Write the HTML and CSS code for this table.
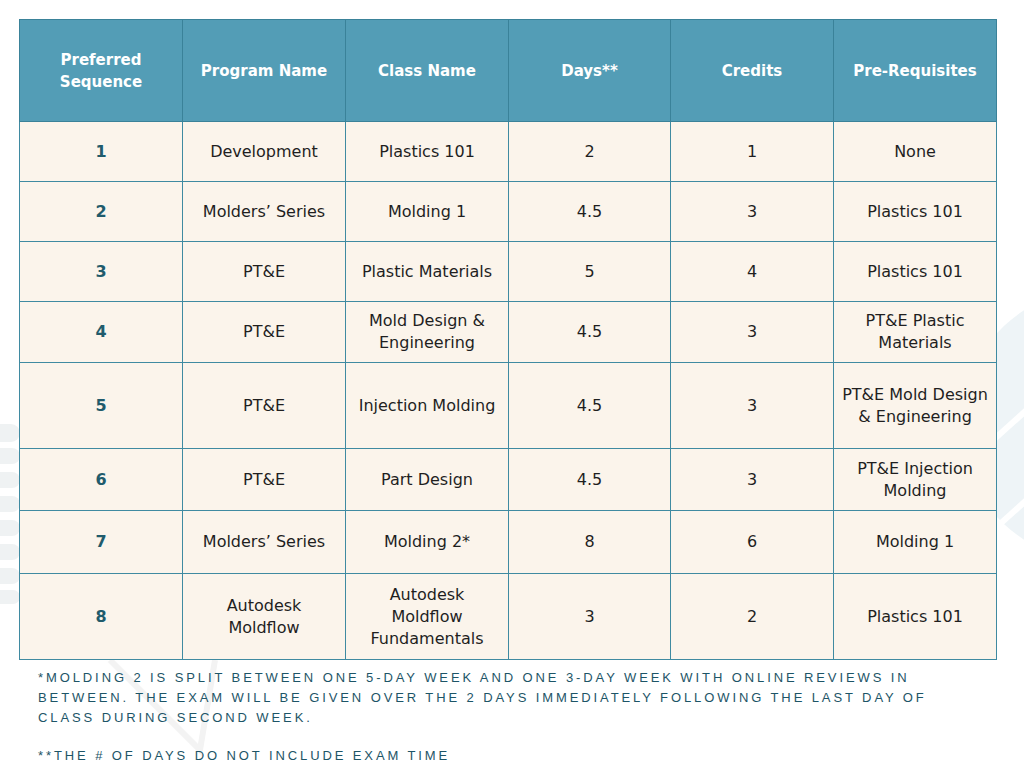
FILE: index.html
```html
<!DOCTYPE html>
<html>
<head>
<meta charset="utf-8">
<link rel="stylesheet" href="styles.css">
</head>
<body>
<svg class="decor" width="1024" height="768" viewBox="0 0 1024 768" aria-hidden="true">
  <ellipse cx="1110" cy="425" rx="150" ry="140" fill="#eef4f7"/>
  <line x1="960" y1="560" x2="1060" y2="470" stroke="#ffffff" stroke-width="6"/>
  <line x1="960" y1="470" x2="1060" y2="380" stroke="#ffffff" stroke-width="6"/>
  <g fill="#eff2f3">
    <rect x="-20" y="424" width="40" height="18" rx="9"/>
    <rect x="-20" y="448" width="40" height="16" rx="8"/>
    <rect x="-20" y="472" width="40" height="16" rx="8"/>
    <rect x="-20" y="496" width="40" height="16" rx="8"/>
    <rect x="-20" y="520" width="40" height="16" rx="8"/>
    <rect x="-20" y="544" width="40" height="16" rx="8"/>
    <rect x="-20" y="568" width="40" height="16" rx="8"/>
    <rect x="-20" y="590" width="40" height="14" rx="7"/>
  </g>
  <polyline points="110,660 200,750 215,660" fill="none" stroke="#f3f3f3" stroke-width="6"/>
</svg>
<main class="page">
  <table class="grid">
    <colgroup>
      <col class="c"><col class="c"><col class="c"><col class="c narrow"><col class="c"><col class="c">
    </colgroup>
    <thead>
      <tr class="head">
        <th>Preferred<br>Sequence</th>
        <th>Program Name</th>
        <th>Class Name</th>
        <th>Days**</th>
        <th>Credits</th>
        <th>Pre-Requisites</th>
      </tr>
    </thead>
    <tbody>
      <tr class="r60"><td class="seq">1</td><td>Development</td><td>Plastics 101</td><td>2</td><td>1</td><td>None</td></tr>
      <tr class="r60"><td class="seq">2</td><td>Molders’ Series</td><td>Molding 1</td><td>4.5</td><td>3</td><td>Plastics 101</td></tr>
      <tr class="r60"><td class="seq">3</td><td>PT&amp;E</td><td>Plastic Materials</td><td>5</td><td>4</td><td>Plastics 101</td></tr>
      <tr class="r61"><td class="seq">4</td><td>PT&amp;E</td><td>Mold Design &amp;<br>Engineering</td><td>4.5</td><td>3</td><td>PT&amp;E Plastic<br>Materials</td></tr>
      <tr class="r86"><td class="seq">5</td><td>PT&amp;E</td><td>Injection Molding</td><td>4.5</td><td>3</td><td>PT&amp;E Mold Design<br>&amp; Engineering</td></tr>
      <tr class="r62"><td class="seq">6</td><td>PT&amp;E</td><td>Part Design</td><td>4.5</td><td>3</td><td>PT&amp;E Injection<br>Molding</td></tr>
      <tr class="r63"><td class="seq">7</td><td>Molders’ Series</td><td>Molding 2*</td><td>8</td><td>6</td><td>Molding 1</td></tr>
      <tr class="r86"><td class="seq">8</td><td>Autodesk<br>Moldflow</td><td>Autodesk<br>Moldflow<br>Fundamentals</td><td>3</td><td>2</td><td>Plastics 101</td></tr>
    </tbody>
  </table>
  <section class="notes">
    <p>*Molding 2 is split between one 5-day week and one 3-day week with online reviews in between. The exam will be given over the 2 days immediately following the last day of class during second week.</p>
    <p>**The # of days do not include exam time</p>
  </section>
</main>
</body>
</html>
```
FILE: styles.css
```css
html, body {
  margin: 0;
  padding: 0;
  background: #ffffff;
}
body {
  width: 1024px;
  height: 768px;
  overflow: hidden;
  position: relative;
  font-family: "DejaVu Sans", "Liberation Sans", sans-serif;
}
.decor {
  position: absolute;
  left: 0;
  top: 0;
  z-index: 0;
}
.page {
  position: relative;
  z-index: 1;
  padding: 19px 0 0 19px;
}
.grid {
  border-collapse: collapse;
  table-layout: fixed;
  width: 977px;
}
.c { width: 163px; }
.c.narrow { width: 162px; }
.grid th, .grid td {
  border: 1px solid #3f8aa1;
  text-align: center;
  vertical-align: middle;
  padding: 0 4px;
  line-height: 22px;
}
.head { height: 102px; }
.grid th {
  background: #539db6;
  color: #ffffff;
  font-weight: 700;
  font-size: 15px;
  border-color: #3a8299;
}
.grid td {
  background: #fbf4eb;
  color: #1f1f1f;
  font-size: 16px;
  font-weight: 400;
}
.grid td.seq {
  color: #215b6c;
  font-weight: 700;
}
.r60 { height: 60px; }
.r61 { height: 61px; }
.r62 { height: 62px; }
.r63 { height: 63px; }
.r86 { height: 86px; }
.notes {
  padding: 8px 0 0 19px;
  color: #1d5567;
  font-family: "Liberation Sans", Arial, sans-serif;
  font-size: 13px;
  text-transform: uppercase;
  letter-spacing: 2.9px;
  line-height: 20px;
  width: 905px;
}
.notes p {
  margin: 0 0 18px 0;
}
```
